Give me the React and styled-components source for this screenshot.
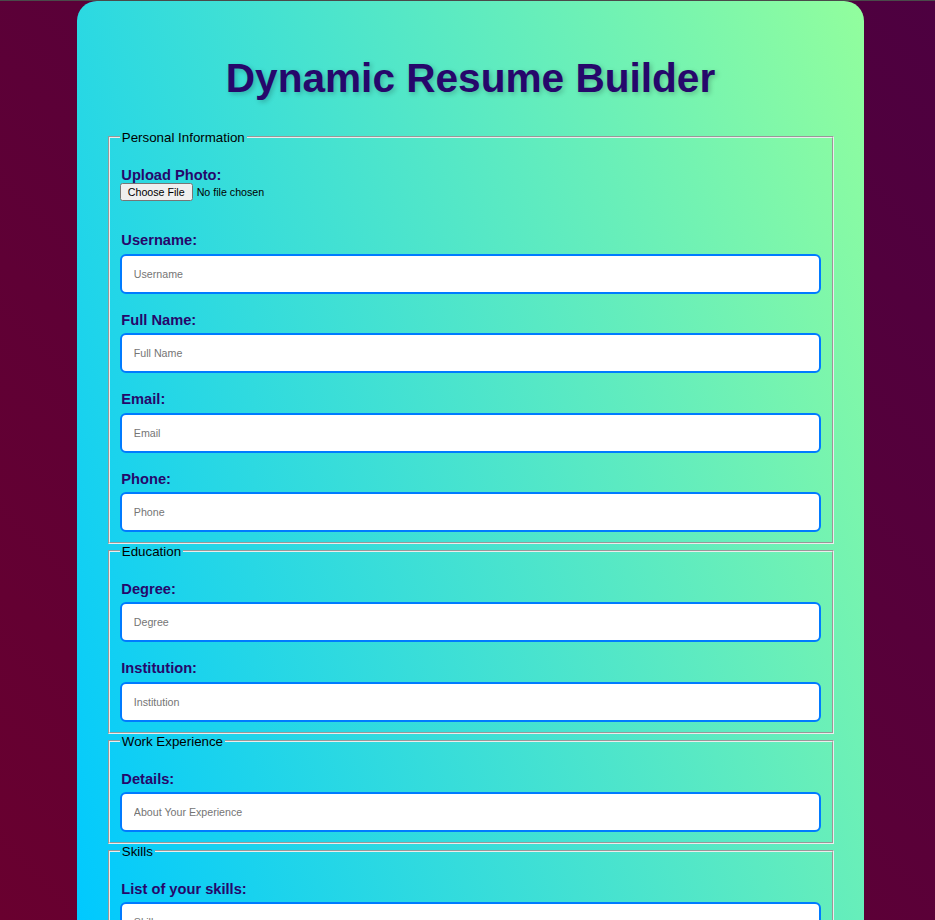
import React from "react";
import styled, { createGlobalStyle } from "styled-components";

const GlobalStyle = createGlobalStyle`
  html {
    background: linear-gradient(45deg, #69002f, #4d0040) fixed;
    min-height: 100%;
  }
  body {
    margin: 0;
    border-top: 1px solid #4a4a4a;
    font-family: "Liberation Sans", Arial, sans-serif;
    font-size: 13.33px;
    color: #000;
  }
`;

const Container = styled.div`
  width: 787px;
  box-sizing: border-box;
  margin: 0 0 40px 77px;
  padding: 27px 28.5px 30px;
  border-radius: 20px;
  background-color: #4fe8c4;
  background-image: linear-gradient(70deg, #00c9ff, #92fe9d);
  background-size: 100% 920px;
  background-repeat: no-repeat;
`;

const Title = styled.h1`
  margin: 26.6px 0 28.4px;
  text-align: center;
  font-size: 40.6px;
  font-weight: bold;
  color: #26076b;
  text-shadow: 2px 2px 5px rgba(0, 0, 0, 0.22);
`;

const Fieldset = styled.fieldset`
  margin: 0 2px;
  padding: 4px 10.3px 9.5px;
  border: 2px groove #ececec;
  min-width: 0;
`;

const Legend = styled.legend`
  padding: 0 2px;
  font-size: 13.33px;
  color: #000;
`;

const Label = styled.label`
  display: block;
  margin: 18px 0 0;
  padding-left: 1.5px;
  font-size: 14.67px;
  font-weight: bold;
  color: #26076b;
`;

const TextInput = styled.input`
  display: block;
  box-sizing: border-box;
  width: 100%;
  height: 40px;
  margin: 5.6px 0 0;
  padding: 0 12px;
  border: 2px solid #007bff;
  border-radius: 6px;
  background: #fff;
  font-family: "Liberation Sans", Arial, sans-serif;
  font-size: 10.67px;
  outline: none;
  &::placeholder {
    color: #757575;
  }
`;

const FileInput = styled.input`
  display: block;
  margin: 0 0 31px;
  font-family: "Liberation Sans", Arial, sans-serif;
  font-size: 10.67px;
  color: #000;
`;

const SubmitButton = styled.button`
  display: block;
  margin: 20px auto 0;
  padding: 12px 24px;
  border: none;
  border-radius: 6px;
  background: #007bff;
  color: #fff;
  font-family: "Liberation Sans", Arial, sans-serif;
  font-size: 14.67px;
  font-weight: bold;
`;

function Field({ label, placeholder }) {
  return (
    <>
      <Label>{label}</Label>
      <TextInput type="text" placeholder={placeholder} />
    </>
  );
}

export default function App() {
  return (
    <>
      <GlobalStyle />
      <Container>
        <Title>Dynamic Resume Builder</Title>
        <form onSubmit={(e) => e.preventDefault()}>
          <Fieldset>
            <Legend>Personal Information</Legend>
            <Label>Upload Photo:</Label>
            <FileInput type="file" accept="image/*" />
            <Field label="Username:" placeholder="Username" />
            <Field label="Full Name:" placeholder="Full Name" />
            <Field label="Email:" placeholder="Email" />
            <Field label="Phone:" placeholder="Phone" />
          </Fieldset>
          <Fieldset>
            <Legend>Education</Legend>
            <Field label="Degree:" placeholder="Degree" />
            <Field label="Institution:" placeholder="Institution" />
          </Fieldset>
          <Fieldset>
            <Legend>Work Experience</Legend>
            <Field label="Details:" placeholder="About Your Experience" />
          </Fieldset>
          <Fieldset>
            <Legend>Skills</Legend>
            <Field label="List of your skills:" placeholder="Skills" />
          </Fieldset>
          <SubmitButton type="submit">Generate Resume</SubmitButton>
        </form>
      </Container>
    </>
  );
}
